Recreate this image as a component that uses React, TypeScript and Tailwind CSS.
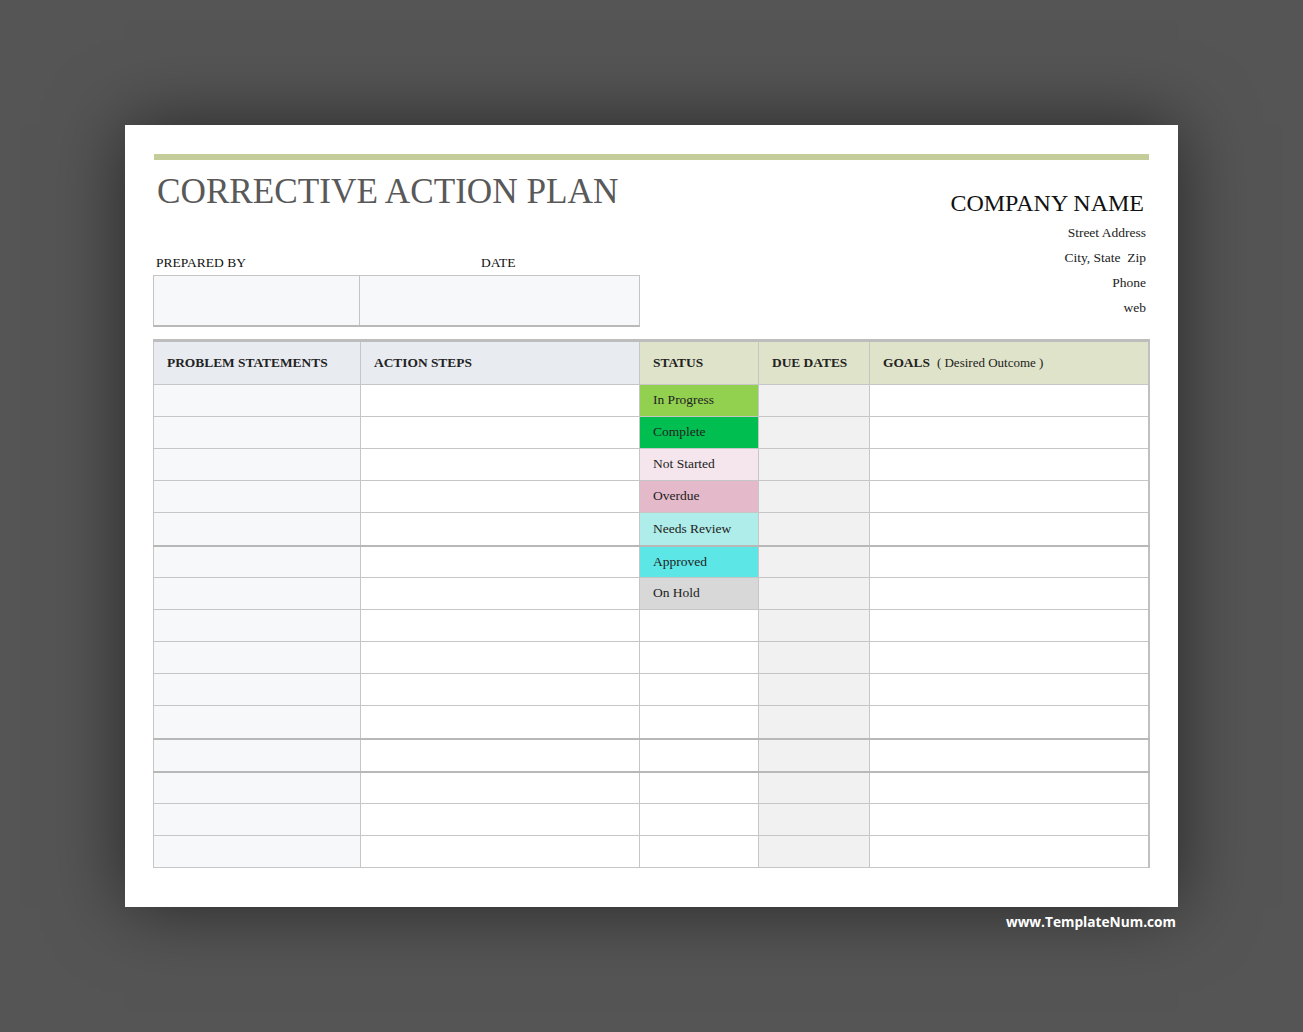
const statuses: { label: string; bg: string }[] = [
  { label: "In Progress", bg: "bg-[#92d050]" },
  { label: "Complete", bg: "bg-[#00bf50]" },
  { label: "Not Started", bg: "bg-[#f4e6ec]" },
  { label: "Overdue", bg: "bg-[#e4bacb]" },
  { label: "Needs Review", bg: "bg-[#aeede9]" },
  { label: "Approved", bg: "bg-[#5ce6e6]" },
  { label: "On Hold", bg: "bg-[#d8d8d8]" },
];

const rows = Array.from({ length: 15 }, (_, i) => i);
const thickAfter = [4, 10, 11];

const serif = { fontFamily: '"Liberation Serif", "DejaVu Serif", serif' };

export default function App() {
  return (
    <div
      className="w-[1303px] h-[1032px] bg-[#555555] pt-[125px] pl-[125px] overflow-hidden"
      style={serif}
    >
      <div className="w-[1053px] h-[782px] bg-white shadow-[0_0_70px_rgba(0,0,0,0.55)] pt-[29px] pl-[28px]">
        <div className="ml-[1px] w-[995px] h-[6px] bg-[#c4cc99]" />

        <div className="flex w-[994px]">
          <div className="w-[487px]">
            <h1 className="mt-[12px] ml-[4px] text-[35.2px] leading-[40px] text-[#595959]">
              CORRECTIVE ACTION PLAN
            </h1>
            <div className="mt-[44px] flex text-[13.5px] leading-[14px] text-[#111]">
              <span className="ml-[3px] w-[325px]">PREPARED BY</span>
              <span>DATE</span>
            </div>
            <div className="mt-[5px] flex h-[52px] border border-[#c4c4c4] border-b-2 border-b-[#b9b9b9] bg-[#f7f8fa]">
              <div className="w-[206px] border-r border-[#c4c4c4]" />
              <div className="flex-1" />
            </div>
          </div>
          <div className="flex-1 flex flex-col items-end pr-[1px]">
            <div className="mt-[29px] mr-[2px] text-[24px] leading-[28px] text-[#111]">
              COMPANY NAME
            </div>
            <div className="mt-[3px] flex flex-col items-end text-[13.5px] leading-[25px] text-[#222]">
              <span>Street Address</span>
              <span>City, State&nbsp; Zip</span>
              <span>Phone</span>
              <span>web</span>
            </div>
          </div>
        </div>

        <table className="mt-[12px] w-[995px] border-collapse border-t-[3px] border-t-[#bdbdbd] border-r-2 border-r-[#c0c0c0] table-fixed">
          <colgroup>
            <col className="w-[207px]" />
            <col className="w-[279px]" />
            <col className="w-[119px]" />
            <col className="w-[111px]" />
            <col className="w-[279px]" />
          </colgroup>
          <thead>
            <tr className="h-[44px] text-[13.4px] text-[#222] text-left">
              <th className="bg-[#e8ebf0] border border-[#c6c6c6] pl-[13px] font-bold">
                PROBLEM STATEMENTS
              </th>
              <th className="bg-[#e8ebf0] border border-[#c6c6c6] pl-[13px] font-bold">
                ACTION STEPS
              </th>
              <th className="bg-[#dfe3c9] border border-[#c6c6c6] pl-[13px] font-bold">
                STATUS
              </th>
              <th className="bg-[#dfe3c9] border border-[#c6c6c6] pl-[13px] font-bold">
                DUE DATES
              </th>
              <th className="bg-[#dfe3c9] border border-[#c6c6c6] pl-[13px] font-bold">
                GOALS
                <span className="ml-[7px] text-[13px] font-normal">( Desired Outcome )</span>
              </th>
            </tr>
          </thead>
          <tbody>
            {rows.map((i) => {
              const s = statuses[i];
              const thick = thickAfter.includes(i);
              const b = thick
                ? "border border-[#c6c6c6] border-b-2 border-b-[#b8b8b8]"
                : "border border-[#c6c6c6]";
              return (
                <tr
                  key={i}
                  className={`${thick ? "h-[33px]" : "h-[32px]"} text-[13.5px] text-[#222]`}
                >
                  <td className={`${b} bg-[#f7f8fa]`} />
                  <td className={`${b} bg-white`} />
                  <td className={`${b} ${s ? s.bg : "bg-white"} pl-[13px]`}>
                    {s ? s.label : ""}
                  </td>
                  <td className={`${b} bg-[#f1f1f1]`} />
                  <td className={`${b} bg-white`} />
                </tr>
              );
            })}
          </tbody>
        </table>
      </div>
      <div
        className="w-[1051px] mt-[5px] text-right text-[13.7px] font-bold text-white"
        style={{ fontFamily: '"Open Sans", "DejaVu Sans", sans-serif' }}
      >
        www.TemplateNum.com
      </div>
    </div>
  );
}
